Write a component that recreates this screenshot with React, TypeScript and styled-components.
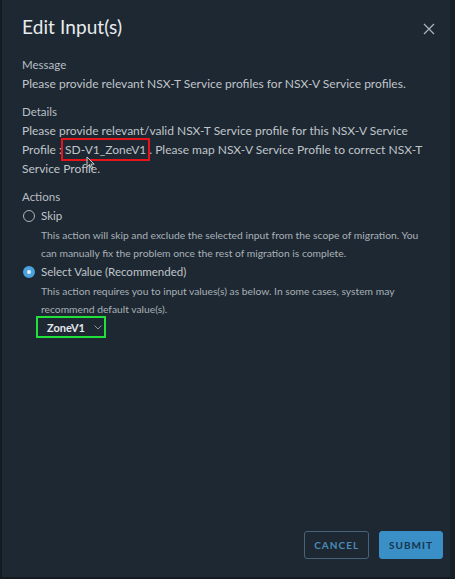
import React from "react"
import styled, { createGlobalStyle } from "styled-components"

const Global = createGlobalStyle`
  html, body {
    margin: 0;
    padding: 0;
    background: #121a20;
  }
  * { box-sizing: border-box; }
`

const App = () => {
  return (
    <>
      <Global />
      <Dialog>
        <Header>
          <Title>Edit Input(s)</Title>
          <Close aria-label="close">
            <svg width="12" height="12" viewBox="0 0 12 12">
              <path d="M1 1 L11 11 M11 1 L1 11" stroke="#a9b2ba" strokeWidth="1.3" />
            </svg>
          </Close>
        </Header>

        <Body>
          <Section>
            <Label>Message</Label>
            <Text>Please provide relevant NSX-T Service profiles for NSX-V Service profiles.</Text>
          </Section>

          <Section>
            <Label>Details</Label>
            <Text>
              Please provide relevant/valid NSX-T Service profile for this NSX-V Service Profile :
              <Marked>SD-V1_ZoneV1</Marked>
              <CursorSpot>
                <svg width="9" height="14" viewBox="0 0 9 14">
                  <path d="M1 1 L1 11 L3.5 8.6 L5.4 12.6 L6.8 12 L5 8.2 L8.2 8.2 Z" fill="#2a2f35" stroke="#d6d9dc" strokeWidth="0.9" />
                </svg>
              </CursorSpot>
              . Please map NSX-V Service Profile to correct NSX-T Service Profile.
            </Text>
          </Section>

          <Section>
            <Label>Actions</Label>
            <Option>
              <Radio />
              <span>Skip</span>
            </Option>
            <Hint>
              This action will skip and exclude the selected input from the scope of migration. You can manually fix the problem once the rest of migration is complete.
            </Hint>
            <Option>
              <Radio checked />
              <span>Select Value (Recommended)</span>
            </Option>
            <Hint>
              This action requires you to input values(s) as below. In some cases, system may recommend default value(s).
            </Hint>
            <SelectBox>
              <span>ZoneV1</span>
              <svg width="8" height="5" viewBox="0 0 8 5">
                <path d="M0.5 0.5 L4 4 L7.5 0.5" fill="none" stroke="#8c969f" strokeWidth="1" />
              </svg>
            </SelectBox>
          </Section>
        </Body>

        <Footer>
          <Button>CANCEL</Button>
          <Button primary>SUBMIT</Button>
        </Footer>
      </Dialog>
    </>
  )
}

export default App

const Dialog = styled.div`
  width: 455px;
  height: 579px;
  background-color: #1d2832;
  border-left: 2px solid #131b21;
  border-right: 5px solid #161f26;
  border-bottom: 2px solid #131b21;
  display: flex;
  flex-direction: column;
  padding: 14px 5px 18px 20px;
  font-family: Lato, "Liberation Sans", sans-serif;
  color: #c3c8cc;
`
const Header = styled.div`
  display: flex;
  align-items: center;
  justify-content: space-between;
  height: 24px;
`
const Title = styled.div`
  font-size: 19px;
  color: #e9ecee;
  letter-spacing: 0.1px;
`
const Close = styled.div`
  display: flex;
  align-items: center;
  margin-top: 6px;
  margin-right: 10px;
`
const Body = styled.div`
  margin-top: 18px;
  padding-right: 11px;
  display: flex;
  flex-direction: column;
  gap: 10px;
`
const Section = styled.div`
  display: flex;
  flex-direction: column;
`
const Label = styled.div`
  font-size: 11.5px;
  line-height: 18.7px;
  color: #b9bfc4;
`
const Text = styled.div`
  font-size: 12px;
  line-height: 18.7px;
  color: #c0c5ca;
  padding-right: 4px;
`
const Marked = styled.span`
  margin-left: 3px;
  outline: 2px solid #e8141c;
  outline-offset: 2px;
`
const CursorSpot = styled.span`
  position: relative;
  display: inline-block;
  width: 3px;

  svg {
    position: absolute;
    left: -60px;
    top: 2px;
  }
`
const Option = styled.div`
  display: flex;
  align-items: center;
  gap: 6px;
  font-size: 11.5px;
  line-height: 18.7px;
  color: #c0c5ca;
  margin-left: 1px;
`
const Radio = styled.span<{ checked?: boolean }>`
  width: 12px;
  height: 12px;
  border-radius: 50%;
  border: ${(p) => (p.checked ? "4px solid #4aa3df" : "1px solid #aeb5bb")};
  background: ${(p) => (p.checked ? "#e8eef2" : "transparent")};
  flex-shrink: 0;
`
const Hint = styled.div`
  font-size: 10.3px;
  line-height: 18.7px;
  color: #aab1b7;
  padding-left: 19px;
  padding-right: 4px;
`
const SelectBox = styled.div`
  display: flex;
  align-items: center;
  gap: 9px;
  width: 66px;
  height: 18px;
  margin-left: 16px;
  margin-top: -1px;
  padding-left: 9px;
  outline: 2px solid #22e03a;
  font-size: 11px;
  font-weight: 700;
  color: #e6e9ec;
`
const Footer = styled.div`
  margin-top: auto;
  display: flex;
  justify-content: flex-end;
  gap: 10px;
  margin-right: 2px;
`
const Button = styled.div<{ primary?: boolean }>`
  height: 28px;
  padding: 0 9px;
  min-width: 63px;
  display: flex;
  align-items: center;
  justify-content: center;
  border-radius: 3px;
  font-size: 10px;
  font-weight: 700;
  letter-spacing: 1px;
  border: 1px solid ${(p) => (p.primary ? "#3a8fc7" : "#46637a")};
  background: ${(p) => (p.primary ? "#3a8fc7" : "transparent")};
  color: ${(p) => (p.primary ? "#15354d" : "#4a8cb8")};
`
